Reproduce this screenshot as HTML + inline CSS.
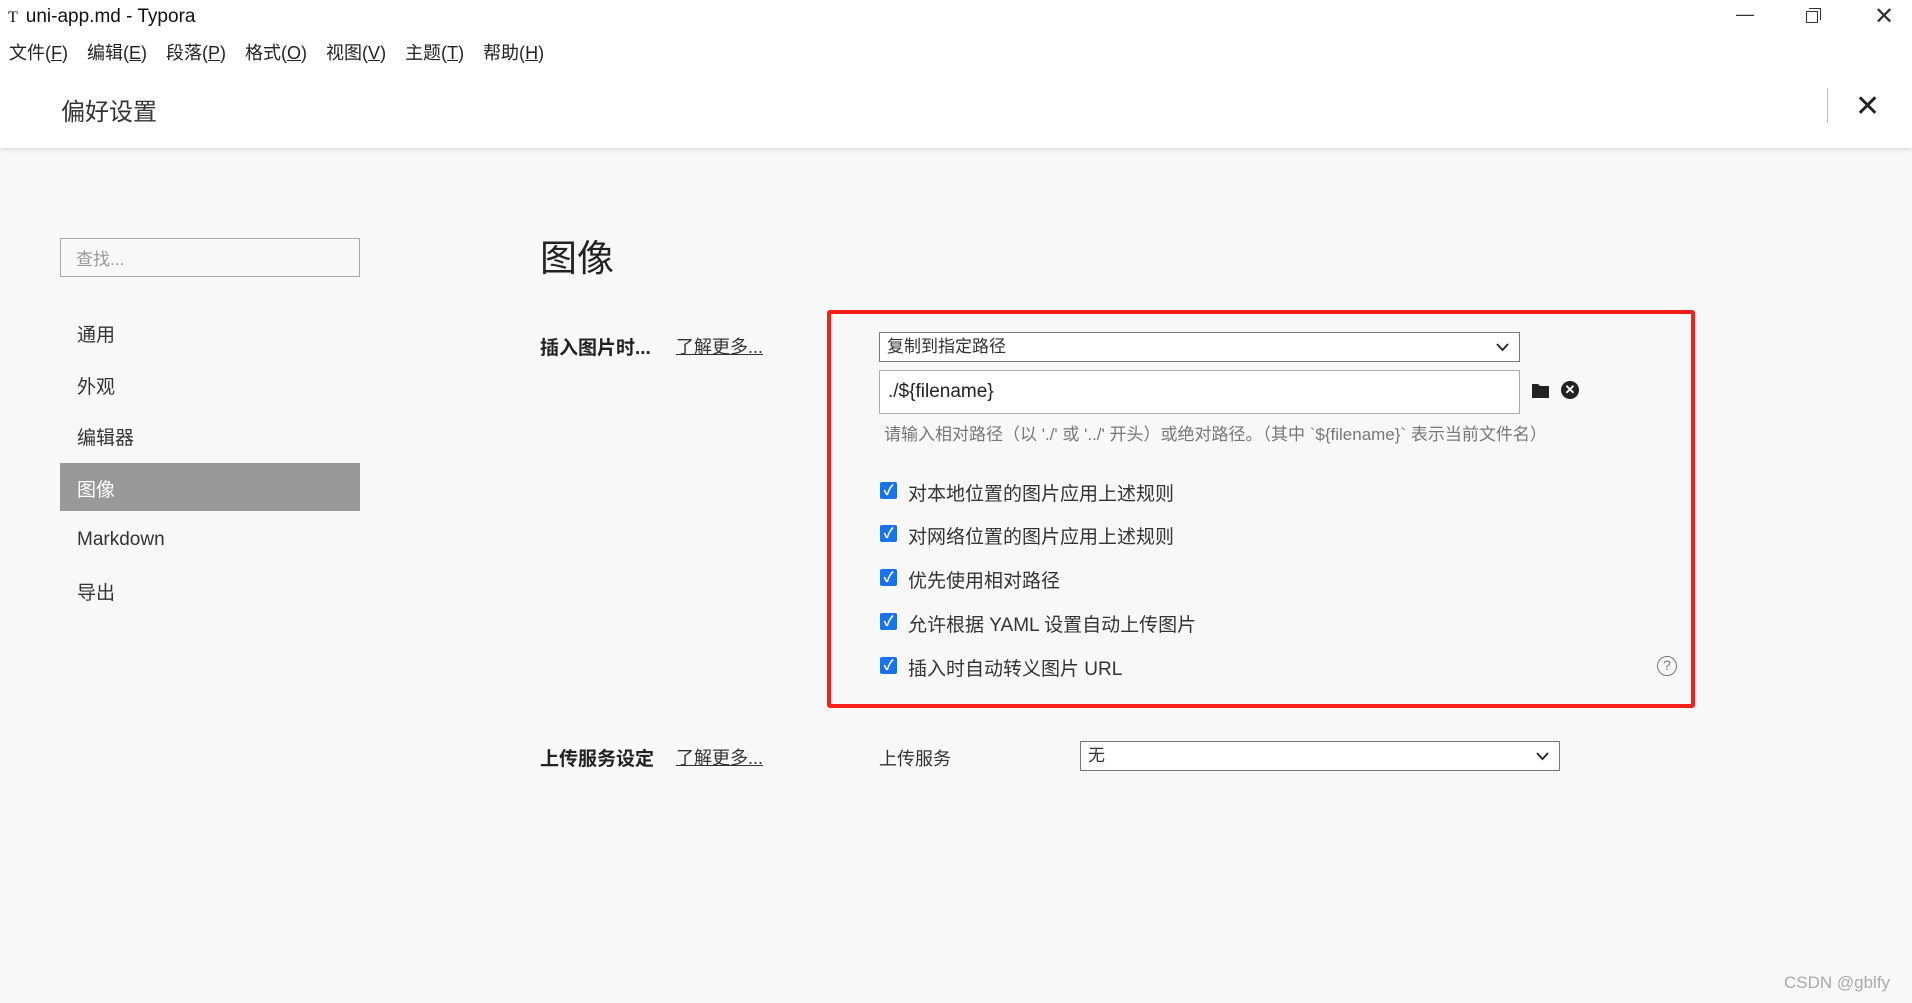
<!DOCTYPE html>
<html><head><meta charset="utf-8"><style>
*{margin:0;padding:0;box-sizing:border-box}
body{width:1912px;height:1003px;overflow:hidden;background:#f8f8f8;font-family:"Liberation Sans","Noto Sans CJK SC",sans-serif;color:#333;position:relative}
.a{position:absolute;white-space:nowrap}
#top{position:absolute;left:0;top:0;width:1912px;height:148px;background:#fff;box-shadow:0 1px 4px rgba(0,0,0,.15)}
.menu span{margin-right:19px}
.side{font-size:19px;color:#333}
.cb{position:absolute;left:880px;width:17px;height:17px;background:#1a73e8;border-radius:2px;color:#fff;font-size:14px;line-height:17px;text-align:center;font-weight:bold}
.cbt{position:absolute;left:908px;font-size:19px;color:#333;white-space:nowrap}
.sel{position:absolute;background:#fff;border:1px solid #777;font-size:17px;padding-left:7px}
.chev{position:absolute;right:10px;top:10px}
</style></head><body>
<div id="top"></div>
<div class="a" style="left:8px;top:6px;font-size:19px;color:#111"><span style="font-family:'Liberation Serif';font-size:16px;margin-right:8px">T</span>uni-app.md - Typora</div>
<div class="a" style="left:1736px;top:4px;font-size:18px;color:#333">&#8212;</div>
<div class="a" style="left:1806px;top:11px;width:12px;height:12px;border:1.5px solid #333;background:#fff"></div>
<div class="a" style="left:1809px;top:8px;width:12px;height:12px;border-top:1.5px solid #333;border-right:1.5px solid #333"></div>
<div class="a" style="left:1874px;top:2px;font-size:24px;color:#333;font-weight:300">&#x2715;</div>
<div class="a menu" style="left:9px;top:39px;font-size:18px;color:#222"><span>文件(<u>F</u>)</span><span>编辑(<u>E</u>)</span><span>段落(<u>P</u>)</span><span>格式(<u>O</u>)</span><span>视图(<u>V</u>)</span><span>主题(<u>T</u>)</span><span>帮助(<u>H</u>)</span></div>
<div class="a" style="left:61px;top:92px;font-size:24px;color:#333">偏好设置</div>
<div class="a" style="left:1827px;top:88px;width:1px;height:35px;background:#bbb"></div>
<div class="a" style="left:1855px;top:89px;font-size:30px;color:#222">&#x2715;</div>

<div class="a" style="left:60px;top:238px;width:300px;height:39px;border:1px solid #aaa;background:#f8f8f8;font-size:17px;color:#999;padding:6px 0 0 15px">查找...</div>
<div class="a side" style="left:77px;top:320px">通用</div>
<div class="a side" style="left:77px;top:372px">外观</div>
<div class="a side" style="left:77px;top:423px">编辑器</div>
<div class="a" style="left:60px;top:463px;width:300px;height:48px;background:#999"></div>
<div class="a side" style="left:77px;top:475px;color:#fff">图像</div>
<div class="a side" style="left:77px;top:529px">Markdown</div>
<div class="a side" style="left:77px;top:578px">导出</div>

<div class="a" style="left:540px;top:228px;font-size:37px;color:#222">图像</div>
<div class="a" style="left:540px;top:333px;font-size:19px;font-weight:bold;color:#222">插入图片时...</div>
<div class="a" style="left:676px;top:333px;font-size:18px;text-decoration:underline;color:#333">了解更多...</div>

<div class="a" style="left:827px;top:310px;width:868px;height:398px;border:4px solid #f8201a;border-radius:3px"></div>
<div class="sel" style="left:879px;top:332px;width:641px;height:30px;line-height:27px">复制到指定路径<svg class="chev" width="13" height="9" viewBox="0 0 13 9"><path d="M1 1l5.5 6L12 1" fill="none" stroke="#222" stroke-width="1.8"/></svg></div>
<div class="a" style="left:879px;top:370px;width:641px;height:44px;border:1px solid #aaa;background:#fff;font-size:19px;padding:10px 0 0 8px;color:#222">./${filename}</div>
<svg class="a" style="left:1531px;top:382px" width="20" height="17" viewBox="0 0 20 17"><path d="M1 2h6l2 2h9v12H1z" fill="#222"/></svg>
<div class="a" style="left:1561px;top:381px;width:18px;height:18px;border-radius:50%;background:#222;color:#fff;font-size:13px;line-height:18px;text-align:center;font-weight:bold">&#x2715;</div>
<div class="a" style="left:884px;top:420px;font-size:17px;color:#777">请输入相对路径（以 './' 或 '../' 开头）或绝对路径。（其中 `${filename}` 表示当前文件名）</div>

<div class="cb" style="top:482px">&#x2713;</div><div class="cbt" style="top:479px">对本地位置的图片应用上述规则</div>
<div class="cb" style="top:525px">&#x2713;</div><div class="cbt" style="top:522px">对网络位置的图片应用上述规则</div>
<div class="cb" style="top:569px">&#x2713;</div><div class="cbt" style="top:566px">优先使用相对路径</div>
<div class="cb" style="top:613px">&#x2713;</div><div class="cbt" style="top:610px">允许根据 YAML 设置自动上传图片</div>
<div class="cb" style="top:657px">&#x2713;</div><div class="cbt" style="top:654px">插入时自动转义图片 URL</div>
<div class="a" style="left:1657px;top:656px;width:20px;height:20px;border:1.5px solid #777;border-radius:50%;font-size:14px;line-height:17px;text-align:center;color:#777">?</div>

<div class="a" style="left:540px;top:744px;font-size:19px;font-weight:bold;color:#222">上传服务设定</div>
<div class="a" style="left:676px;top:744px;font-size:18px;text-decoration:underline;color:#333">了解更多...</div>
<div class="a" style="left:879px;top:745px;font-size:18px;color:#333">上传服务</div>
<div class="sel" style="left:1080px;top:741px;width:480px;height:30px;line-height:27px">无<svg class="chev" width="13" height="9" viewBox="0 0 13 9"><path d="M1 1l5.5 6L12 1" fill="none" stroke="#222" stroke-width="1.8"/></svg></div>

<div class="a" style="left:1784px;top:973px;font-size:17px;color:#aaa">CSDN @gblfy</div>
</body></html>
